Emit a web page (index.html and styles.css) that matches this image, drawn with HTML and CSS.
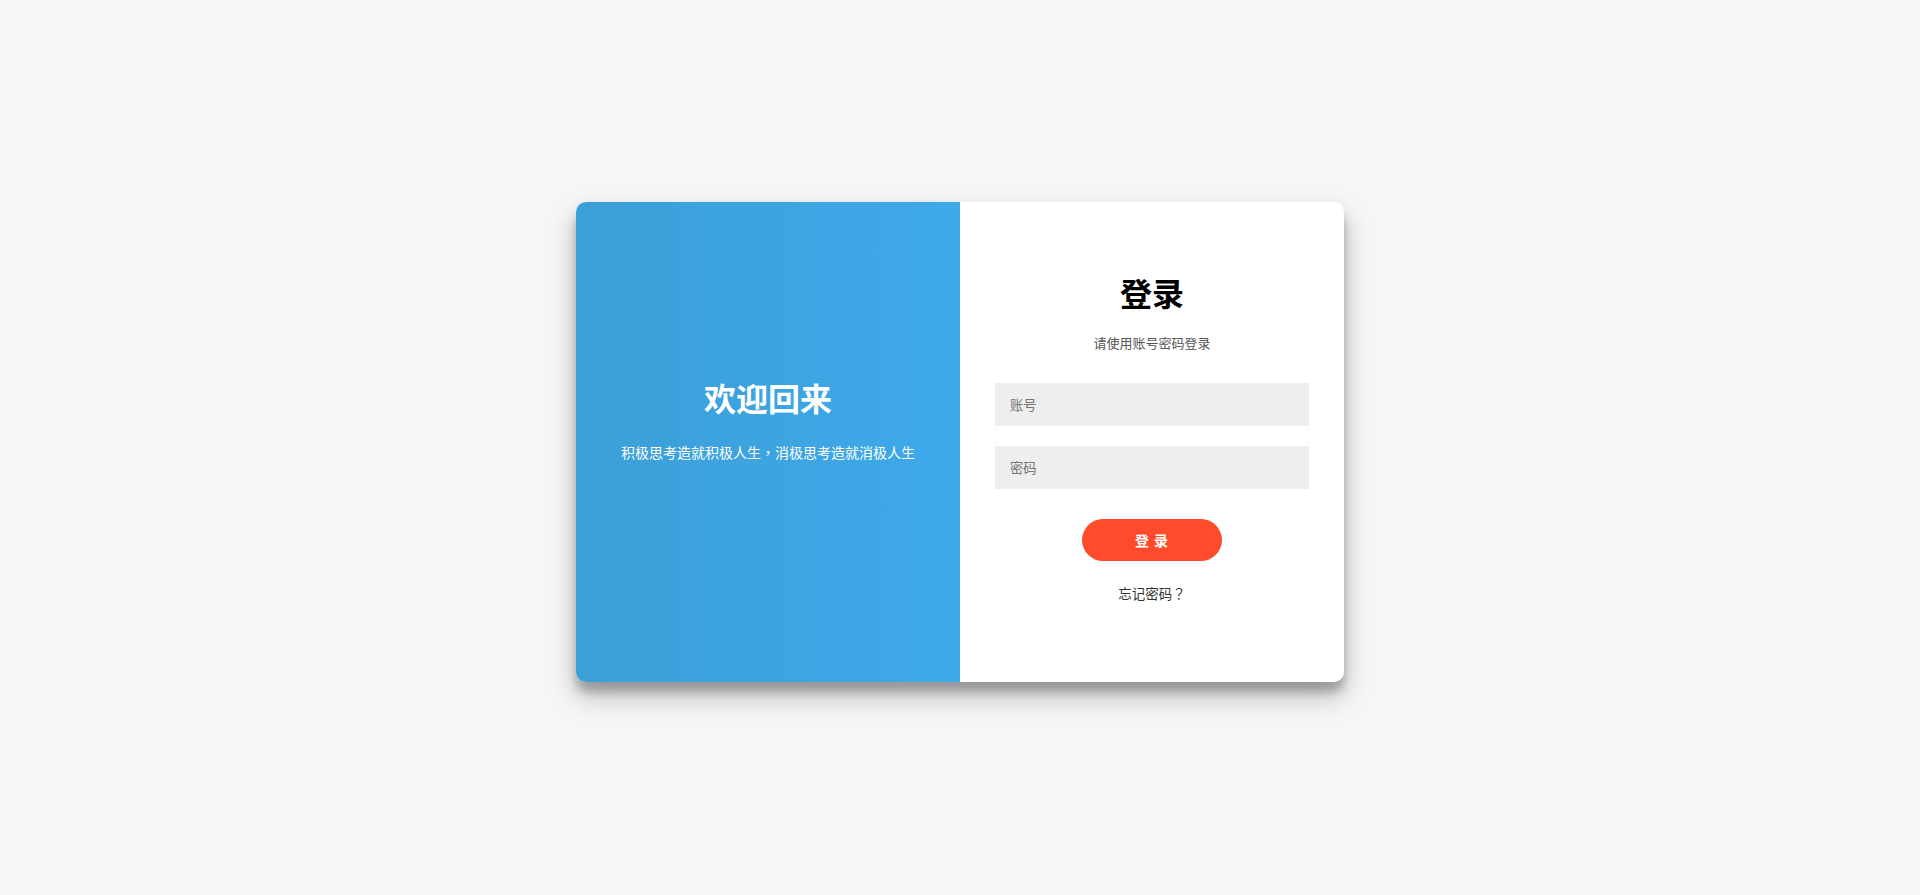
FILE: index.html
```html
<!DOCTYPE html>
<html lang="zh-CN">
<head>
<meta charset="UTF-8">
<title>登录</title>
<link rel="stylesheet" href="styles.css">
</head>
<body>
<div class="page">
  <div class="card">
    <div class="welcome">
      <h1 class="welcome-title">欢迎回来</h1>
      <p class="welcome-text">积极思考造就积极人生<span class="punct" lang="zh-TW">，</span>消极思考造就消极人生</p>
    </div>
    <form class="login">
      <h1 class="login-title">登录</h1>
      <p class="login-sub">请使用账号密码登录</p>
      <input class="field field-first" type="text" placeholder="账号">
      <input class="field" type="password" placeholder="密码">
      <button class="btn" type="button">登 录</button>
      <a class="forgot" href="#">忘记密码<span class="punct" lang="zh-TW">？</span></a>
    </form>
  </div>
</div>
</body>
</html>
```

FILE: styles.css
```css
* { box-sizing: border-box; }
html, body {
  margin: 0;
  padding: 0;
  height: 100%;
  background: #f5f6f8;
  font-family: "Noto Sans CJK SC", "Noto Sans", sans-serif;
}
.page {
  display: flex;
  justify-content: center;
  padding-top: 202px;
}
.card {
  width: 768px;
  height: 480px;
  display: flex;
  border-radius: 10px;
  overflow: hidden;
  background: #fff;
  box-shadow: 0 14px 28px rgba(0,0,0,0.25), 0 10px 10px rgba(0,0,0,0.22);
}
.welcome {
  width: 384px;
  background: linear-gradient(to right, #3c9fd7, #3ea9ea);
  color: #fff;
  display: flex;
  flex-direction: column;
  align-items: center;
  padding-top: 175px;
}
.welcome-title {
  margin: 0;
  font-size: 32px;
  line-height: 40px;
  font-weight: 700;
}
.welcome-text {
  margin: 25px 0 0;
  font-size: 14px;
  line-height: 20px;
}
.punct {
  font-family: "Noto Sans CJK TC", "Noto Sans CJK SC", sans-serif;
}
.login {
  width: 384px;
  display: flex;
  flex-direction: column;
  align-items: center;
  padding: 70px 35px 0;
  margin: 0;
}
.login-title {
  margin: 0;
  font-size: 32px;
  line-height: 40px;
  font-weight: 700;
  color: #000;
}
.login-sub {
  margin: 21px 0 0;
  font-size: 13px;
  line-height: 20px;
  color: #555;
}
.field {
  width: 100%;
  height: 43px;
  margin-top: 20px;
  border: none;
  outline: none;
  background: #eee;
  padding: 0 15px;
  font-family: inherit;
  font-size: 13.33px;
  color: #333;
}
.field-first { margin-top: 30px; }
.field::placeholder { color: #757575; }
.btn {
  margin-top: 30px;
  width: 140px;
  height: 42px;
  border: none;
  border-radius: 21px;
  background: #ff4b2b;
  color: #fff;
  font-family: inherit;
  font-size: 14px;
  font-weight: 700;
  letter-spacing: 1px;
  cursor: pointer;
}
.forgot {
  margin-top: 22px;
  font-size: 13.5px;
  line-height: 20px;
  color: #333;
  text-decoration: none;
}
```
